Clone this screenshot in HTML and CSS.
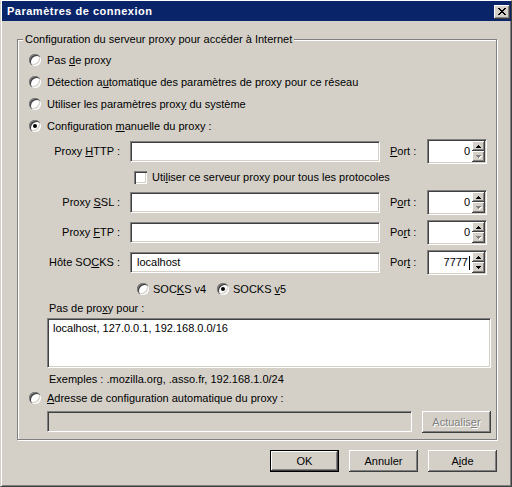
FILE: index.html
```html
<!DOCTYPE html>
<html lang="fr">
<head>
<meta charset="utf-8">
<title>Paramètres de connexion</title>
<link rel="stylesheet" href="styles.css">
</head>
<body>
<div class="window">
  <div class="titlebar">
    <span class="title">Paramètres de connexion</span>
    <span class="close"><svg width="8" height="7" viewBox="0 0 8 7" shape-rendering="crispEdges"><path d="M0 0h2v1H0zM6 0h2v1H6zM1 1h2v1H1zM5 1h2v1H5zM2 2h4v1H2zM3 3h2v1H3zM2 4h4v1H2zM1 5h2v1H1zM5 5h2v1H5zM0 6h2v1H0zM6 6h2v1H6z" fill="#000"/></svg></span>
  </div>
  <div class="body">
    <fieldset class="group">
      <legend>Configuration du serveur proxy pour accéder à Internet</legend>
      <div class="inner">
        <div class="opt"><span class="radio"></span><span>Pas <u>d</u>e proxy</span></div>
        <div class="opt"><span class="radio"></span><span>Détection a<u>u</u>tomatique des paramètres de proxy pour ce réseau</span></div>
        <div class="opt"><span class="radio"></span><span>Utiliser les paramètres prox<u>y</u> du système</span></div>
        <div class="opt"><span class="radio checked"></span><span>Configuration <u>m</u>anuelle du proxy :</span></div>

        <div class="prow first">
          <span class="plabel">Proxy <u>H</u>TTP :</span>
          <span class="edit"></span>
          <span class="portlabel"><u>P</u>ort :</span>
          <span class="port">
            <span class="val">0</span>
            <span class="spin">
              <span class="sbtn up"><svg width="5" height="3" viewBox="0 0 5 3" shape-rendering="crispEdges"><path d="M2 0h1v1h1v1h1v1H0V2h1V1h1z" fill="#000"/></svg></span>
              <span class="sbtn down"><svg width="6" height="4" viewBox="0 0 6 4" shape-rendering="crispEdges"><path d="M1 1h5v1H5v1H4v1H3V3H2V2H1z" fill="#fff"/><path d="M0 0h5v1H4v1H3v1H2V2H1V1H0z" fill="#808080"/></svg></span>
            </span>
          </span>
        </div>

        <div class="checkrow"><span class="check"></span><span>Uti<u>l</u>iser ce serveur proxy pour tous les protocoles</span></div>

        <div class="prow ssl">
          <span class="plabel">Proxy <u>S</u>SL :</span>
          <span class="edit"></span>
          <span class="portlabel">P<u>o</u>rt :</span>
          <span class="port">
            <span class="val">0</span>
            <span class="spin">
              <span class="sbtn up"><svg width="5" height="3" viewBox="0 0 5 3" shape-rendering="crispEdges"><path d="M2 0h1v1h1v1h1v1H0V2h1V1h1z" fill="#000"/></svg></span>
              <span class="sbtn down"><svg width="6" height="4" viewBox="0 0 6 4" shape-rendering="crispEdges"><path d="M1 1h5v1H5v1H4v1H3V3H2V2H1z" fill="#fff"/><path d="M0 0h5v1H4v1H3v1H2V2H1V1H0z" fill="#808080"/></svg></span>
            </span>
          </span>
        </div>

        <div class="prow">
          <span class="plabel">Proxy <u>F</u>TP :</span>
          <span class="edit"></span>
          <span class="portlabel">Po<u>r</u>t :</span>
          <span class="port">
            <span class="val">0</span>
            <span class="spin">
              <span class="sbtn up"><svg width="5" height="3" viewBox="0 0 5 3" shape-rendering="crispEdges"><path d="M2 0h1v1h1v1h1v1H0V2h1V1h1z" fill="#000"/></svg></span>
              <span class="sbtn down"><svg width="6" height="4" viewBox="0 0 6 4" shape-rendering="crispEdges"><path d="M1 1h5v1H5v1H4v1H3V3H2V2H1z" fill="#fff"/><path d="M0 0h5v1H4v1H3v1H2V2H1V1H0z" fill="#808080"/></svg></span>
            </span>
          </span>
        </div>

        <div class="prow">
          <span class="plabel">Hôte SO<u>C</u>KS :</span>
          <span class="edit">localhost</span>
          <span class="portlabel">Por<u>t</u> :</span>
          <span class="port">
            <span class="val">7777<span class="caret"></span></span>
            <span class="spin">
              <span class="sbtn up"><svg width="5" height="3" viewBox="0 0 5 3" shape-rendering="crispEdges"><path d="M2 0h1v1h1v1h1v1H0V2h1V1h1z" fill="#000"/></svg></span>
              <span class="sbtn down"><svg width="5" height="3" viewBox="0 0 5 3" shape-rendering="crispEdges"><path d="M0 0h5v1H4v1H3v1H2V2H1V1H0z" fill="#000"/></svg></span>
            </span>
          </span>
        </div>

        <div class="sockrow">
          <span class="sockopt v4"><span class="radio"></span><span>SOC<u>K</u>S v4</span></span>
          <span class="sockopt"><span class="radio checked"></span><span>SOCKS <u>v</u>5</span></span>
        </div>

        <div class="nplabel">Pas de pro<u>x</u>y pour :</div>
        <div class="textarea">localhost, 127.0.0.1, 192.168.0.0/16</div>
        <div class="examples">Exemples : .mozilla.org, .asso.fr, 192.168.1.0/24</div>

        <div class="opt auto"><span class="radio"></span><span><u>A</u>dresse de configuration automatique du proxy :</span></div>
        <div class="autorow">
          <span class="edit disabled"></span>
          <span class="btn disabled-btn">Actualis<u>e</u>r</span>
        </div>
      </div>
    </fieldset>

    <div class="buttons">
      <span class="btn default">OK</span>
      <span class="btn">Annuler</span>
      <span class="btn">A<u>i</u>de</span>
    </div>
  </div>
</div>
</body>
</html>
```
FILE: styles.css
```css
* { box-sizing: border-box; }
html, body { margin: 0; padding: 0; }
body {
  font: 11px/13px "Liberation Sans", Arial, sans-serif;
  color: #000;
  background: #D4D0C8;
}
u { text-decoration: underline; text-underline-offset: 1px; }

.window {
  width: 512px;
  height: 487px;
  background: #D4D0C8;
  border: 1px solid;
  border-color: #fff #404040 #404040 #D4D0C8;
  box-shadow: inset 1px 1px #fff, inset -1px -1px #808080;
  display: flex;
  flex-direction: column;
}

.titlebar {
  margin-left: 1px;
  height: 20px;
  background: #0A246A;
  display: flex;
  align-items: flex-start;
  flex: none;
}
.title {
  color: #fff;
  font-weight: bold;
  letter-spacing: 0.5px;
  line-height: 20px;
  padding-left: 5px;
}
.close {
  width: 16px;
  height: 14px;
  margin: 4px 1px 0 auto;
  background: #D4D0C8;
  box-shadow: inset -1px -1px #404040, inset 1px 1px #fff, inset -2px -2px #808080;
  display: flex;
  align-items: center;
  justify-content: center;
}
.close svg { display: block; margin: 0 1px 1px 0; }

.body {
  flex: 1;
  padding: 12px 14px 0 16px;
  display: flex;
  flex-direction: column;
}

.group {
  margin: 0;
  padding: 3px 0 6px 0;
  border: 1px solid #808080;
  box-shadow: 1px 1px 0 #fff, inset 1px 1px 0 #fff;
  min-width: 0;
}
.group legend {
  margin-left: 5px;
  padding: 0 2px;
  line-height: 13px;
  background: #D4D0C8;
}
.inner {
  padding-left: 11px;
  display: flex;
  flex-direction: column;
}

.opt {
  height: 22px;
  display: flex;
  align-items: center;
  white-space: nowrap;
}
.opt.auto { margin-top: 1px; }

.radio {
  width: 12px;
  height: 12px;
  flex: none;
  border-radius: 50%;
  background: #fff;
  box-shadow: inset 1px 1px 0 #808080, inset 2px 2px 0 #404040, inset -1px -1px 0 #fff, inset -2px -2px 0 #D4D0C8;
  margin-right: 6px;
  display: flex;
  align-items: center;
  justify-content: center;
}
.radio.checked::after {
  content: "";
  width: 4px;
  height: 4px;
  border-radius: 50%;
  background: #000;
}

.prow {
  height: 25px;
  margin-top: 5px;
  display: flex;
  align-items: center;
}
.prow.first { margin-top: 2px; }
.prow.ssl { margin-top: 0; }
.plabel {
  width: 91px;
  margin-right: 10px;
  text-align: right;
  white-space: nowrap;
}
.edit {
  width: 250px;
  height: 21px;
  background: #fff;
  border: 1px solid;
  border-color: #808080 #fff #fff #808080;
  box-shadow: inset 1px 1px #404040, inset -1px -1px #D4D0C8;
  padding: 0 6px;
  display: flex;
  align-items: center;
}
.edit.disabled {
  width: 365px;
  background: #D4D0C8;
}
.portlabel {
  width: 37px;
  margin-left: 10px;
  white-space: nowrap;
}
.port {
  width: 60px;
  height: 25px;
  background: #fff;
  border: 1px solid;
  border-color: #808080 #fff #fff #808080;
  box-shadow: inset 1px 1px #404040, inset -1px -1px #D4D0C8;
  padding: 1px;
  display: flex;
}
.val {
  flex: 1;
  display: flex;
  align-items: center;
  justify-content: flex-end;
  padding-right: 2px;
}
.caret {
  width: 1px;
  height: 14px;
  background: #000;
  margin-left: 1px;
}
.spin {
  width: 13px;
  display: flex;
  flex-direction: column;
}
.sbtn {
  background: #D4D0C8;
  box-shadow: inset -1px -1px #404040, inset 1px 1px #fff, inset -2px -2px #808080;
  display: flex;
  align-items: center;
  justify-content: center;
}
.sbtn.up { flex: 0 0 10px; }
.sbtn.down { flex: 1; }
.sbtn svg { display: block; margin-right: 1px; }
.sbtn.down svg[width="6"] { margin: 1px 0 0 1px; }

.checkrow {
  height: 26px;
  padding-left: 105px;
  display: flex;
  align-items: center;
  white-space: nowrap;
}
.check {
  width: 13px;
  height: 13px;
  flex: none;
  background: #fff;
  box-shadow: inset 1px 1px 0 #808080, inset 2px 2px 0 #404040, inset -1px -1px 0 #fff, inset -2px -2px 0 #D4D0C8;
  margin-right: 5px;
}

.sockrow {
  height: 22px;
  margin-top: 3px;
  padding-left: 108px;
  display: flex;
  align-items: center;
}
.sockopt {
  display: flex;
  align-items: center;
  white-space: nowrap;
}
.sockopt.v4 { width: 80px; }
.sockopt .radio { margin-right: 4px; }

.nplabel {
  margin-top: 1px;
  padding-left: 20px;
  height: 14px;
  line-height: 14px;
}
.textarea {
  margin: 3px 0 0 18px;
  width: 444px;
  height: 50px;
  background: #fff;
  border: 1px solid;
  border-color: #808080 #fff #fff #808080;
  box-shadow: inset 1px 1px #404040, inset -1px -1px #D4D0C8;
  padding: 3px 5px;
}
.examples {
  margin-top: 4px;
  padding-left: 20px;
  height: 14px;
  line-height: 14px;
}
.autorow {
  margin-top: 2px;
  padding-left: 18px;
  height: 22px;
  display: flex;
  gap: 10px;
}

.btn {
  width: 69px;
  height: 22px;
  flex: none;
  background: #D4D0C8;
  box-shadow: inset -1px -1px #404040, inset 1px 1px #fff, inset -2px -2px #808080;
  display: flex;
  align-items: center;
  justify-content: center;
  white-space: nowrap;
}
.btn.default {
  border: 1px solid #000;
}
.btn.disabled-btn {
  color: #808080;
  text-shadow: 1px 1px 0 #fff;
}
.buttons {
  margin-top: 10px;
  display: flex;
  justify-content: flex-end;
  gap: 10px;
}
```
